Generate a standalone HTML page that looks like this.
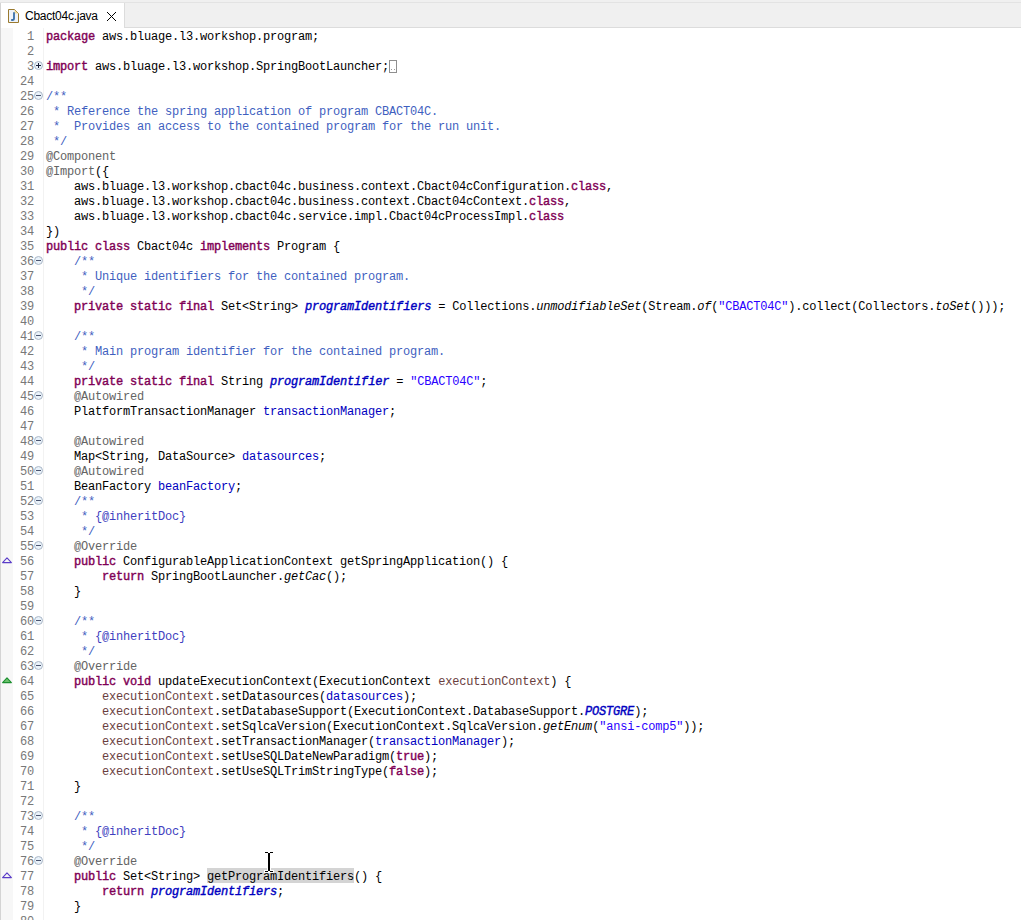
<!DOCTYPE html>
<html><head><meta charset="utf-8"><style>
html,body{margin:0;padding:0;}
body{width:1021px;height:920px;overflow:hidden;position:relative;background:#fff;font-family:"Liberation Mono",monospace;}
#topbar{position:absolute;left:0;top:0;width:1021px;height:28px;background:#f0f0f0;}
#topline{position:absolute;left:0;top:2px;width:1021px;height:1px;background:#e3e3e3;}
#tab{position:absolute;left:1px;top:3px;width:123px;height:25px;background:#fff;}
#tabborder{position:absolute;left:124px;top:3px;width:1px;height:24px;background:#dcdcdc;}
#tabbottom{position:absolute;left:124px;top:27px;width:897px;height:1px;background:#dcdcdc;}
#tabtitle{position:absolute;left:25px;top:8.5px;letter-spacing:-0.25px;font-family:"Liberation Sans",sans-serif;font-size:12px;color:#000;white-space:pre;}
#leftborder{position:absolute;left:0;top:3px;width:1px;height:917px;background:#d4d4d4;}
#ruler{position:absolute;left:1px;top:28px;width:12px;height:892px;background:#f7f7f7;}
#sep{position:absolute;left:43px;top:28px;width:1px;height:892px;background:#f2f2f2;}
.ln{position:absolute;left:12px;width:22px;height:15px;text-align:right;color:#787878;font-size:12.0px;line-height:15px;letter-spacing:-0.200px;white-space:pre;}
.cd{position:absolute;left:46px;height:15px;color:#000;font-size:12.0px;line-height:15px;letter-spacing:-0.200px;white-space:pre;}
.k{color:#7f0055;font-weight:normal;-webkit-text-stroke:0.4px #7f0055;}
.a{color:#646464;}
.c{color:#3f5fbf;}
.jl{color:#3f3fbf;}
.s{color:#2a00ff;}
.f{color:#0000c0;}
.sf{color:#0000c0;font-weight:normal;font-style:italic;-webkit-text-stroke:0.4px #0000c0;}
.sm{font-style:italic;}
.p{color:#6a3e3e;}
.hl{}
#fbox{position:absolute;left:389px;top:60px;width:6px;height:11px;border:1px solid #8f8f8f;}
#fbox i{position:absolute;top:8px;width:1px;height:1px;background:#9a9a9a;}
#hlbox{position:absolute;left:207px;top:868px;width:147px;height:15px;background:#d4d4d4;}
.box{display:inline-block;position:relative;width:7px;height:13px;vertical-align:top;}
.box i{position:absolute;left:0;top:1px;width:6px;height:11px;border:1px solid #8c8c8c;}
.fold{position:absolute;left:34px;}
.tri{position:absolute;left:1px;}
#ibeam{position:absolute;left:259px;top:848px;}
</style></head><body>
<div id="topbar"></div><div id="topline"></div>
<div id="tab"></div><div id="tabborder"></div><div id="tabbottom"></div>
<svg style="position:absolute;left:8px;top:9px" width="11" height="14" viewBox="0 0 11 14"><path d="M0.5 0.5 H6.5 L10.5 4.5 V13.5 H0.5 Z" fill="#eef3fa" stroke="#9a7a30" stroke-width="1"/><path d="M6.5 0.8 V4.5 H10.2 Z" fill="#f2dc98" stroke="none"/><path d="M6 3.2 V9.4 Q6 11 4.2 11 H3.2" fill="none" stroke="#3a70a8" stroke-width="1.8"/></svg>
<div id="tabtitle">Cbact04c.java</div>
<svg style="position:absolute;left:107px;top:12px" width="9" height="9" viewBox="0 0 9 9" shape-rendering="crispEdges"><g fill="#000"><rect x="0" y="0" width="1" height="1"/><rect x="8" y="0" width="1" height="1"/><rect x="1" y="1" width="1" height="1"/><rect x="7" y="1" width="1" height="1"/><rect x="2" y="2" width="1" height="1"/><rect x="6" y="2" width="1" height="1"/><rect x="3" y="3" width="1" height="1"/><rect x="5" y="3" width="1" height="1"/><rect x="4" y="4" width="1" height="1"/><rect x="4" y="4" width="1" height="1"/><rect x="5" y="5" width="1" height="1"/><rect x="3" y="5" width="1" height="1"/><rect x="6" y="6" width="1" height="1"/><rect x="2" y="6" width="1" height="1"/><rect x="7" y="7" width="1" height="1"/><rect x="1" y="7" width="1" height="1"/><rect x="8" y="8" width="1" height="1"/><rect x="0" y="8" width="1" height="1"/></g></svg>
<div id="leftborder"></div>
<div id="ruler"></div>
<div id="sep"></div>
<div id="hlbox"></div>
<div id="fbox"><i style="left:1px"></i><i style="left:4px"></i></div>
<div class="ln" style="top:30px">1</div>
<div class="cd" style="top:30px"><span class="k">package</span> aws.bluage.l3.workshop.program;</div>
<div class="ln" style="top:45px">2</div>
<div class="ln" style="top:60px">3</div>
<div class="cd" style="top:60px"><span class="k">import</span> aws.bluage.l3.workshop.SpringBootLauncher;</div>
<svg class="fold" style="top:61px" width="9" height="9" viewBox="0 0 9 9"><circle cx="4.5" cy="4.5" r="4" fill="#e9f2fa" stroke="#aab6c6" stroke-width="1"/><g stroke-width="1" fill="none"><path d="M2 4.5H7M4.5 2V7" stroke="#161c36"/></g></svg>
<div class="ln" style="top:75px">24</div>
<div class="ln" style="top:90px">25</div>
<div class="cd" style="top:90px"><span class="c">/**</span></div>
<svg class="fold" style="top:91px" width="9" height="9" viewBox="0 0 9 9"><circle cx="4.5" cy="4.5" r="4" fill="#e9f2fa" stroke="#aab6c6" stroke-width="1"/><g stroke-width="1" fill="none"><path d="M2 4.5H7" stroke="#4b5570"/></g></svg>
<div class="ln" style="top:105px">26</div>
<div class="cd" style="top:105px"><span class="c"> * Reference the spring application of program CBACT04C.</span></div>
<div class="ln" style="top:120px">27</div>
<div class="cd" style="top:120px"><span class="c"> *  Provides an access to the contained program for the run unit.</span></div>
<div class="ln" style="top:135px">28</div>
<div class="cd" style="top:135px"><span class="c"> */</span></div>
<div class="ln" style="top:150px">29</div>
<div class="cd" style="top:150px"><span class="a">@Component</span></div>
<div class="ln" style="top:165px">30</div>
<div class="cd" style="top:165px"><span class="a">@Import</span>({</div>
<div class="ln" style="top:180px">31</div>
<div class="cd" style="top:180px">    aws.bluage.l3.workshop.cbact04c.business.context.Cbact04cConfiguration.<span class="k">class</span>,</div>
<div class="ln" style="top:195px">32</div>
<div class="cd" style="top:195px">    aws.bluage.l3.workshop.cbact04c.business.context.Cbact04cContext.<span class="k">class</span>,</div>
<div class="ln" style="top:210px">33</div>
<div class="cd" style="top:210px">    aws.bluage.l3.workshop.cbact04c.service.impl.Cbact04cProcessImpl.<span class="k">class</span></div>
<div class="ln" style="top:225px">34</div>
<div class="cd" style="top:225px">})</div>
<div class="ln" style="top:240px">35</div>
<div class="cd" style="top:240px"><span class="k">public</span> <span class="k">class</span> Cbact04c <span class="k">implements</span> Program {</div>
<div class="ln" style="top:255px">36</div>
<div class="cd" style="top:255px">    <span class="c">/**</span></div>
<svg class="fold" style="top:256px" width="9" height="9" viewBox="0 0 9 9"><circle cx="4.5" cy="4.5" r="4" fill="#e9f2fa" stroke="#aab6c6" stroke-width="1"/><g stroke-width="1" fill="none"><path d="M2 4.5H7" stroke="#4b5570"/></g></svg>
<div class="ln" style="top:270px">37</div>
<div class="cd" style="top:270px">    <span class="c"> * Unique identifiers for the contained program.</span></div>
<div class="ln" style="top:285px">38</div>
<div class="cd" style="top:285px">    <span class="c"> */</span></div>
<div class="ln" style="top:300px">39</div>
<div class="cd" style="top:300px">    <span class="k">private</span> <span class="k">static</span> <span class="k">final</span> Set&lt;String&gt; <span class="sf">programIdentifiers</span> = Collections.<span class="sm">unmodifiableSet</span>(Stream.<span class="sm">of</span>(<span class="s">"CBACT04C"</span>).collect(Collectors.<span class="sm">toSet</span>()));</div>
<div class="ln" style="top:315px">40</div>
<div class="ln" style="top:330px">41</div>
<div class="cd" style="top:330px">    <span class="c">/**</span></div>
<svg class="fold" style="top:331px" width="9" height="9" viewBox="0 0 9 9"><circle cx="4.5" cy="4.5" r="4" fill="#e9f2fa" stroke="#aab6c6" stroke-width="1"/><g stroke-width="1" fill="none"><path d="M2 4.5H7" stroke="#4b5570"/></g></svg>
<div class="ln" style="top:345px">42</div>
<div class="cd" style="top:345px">    <span class="c"> * Main program identifier for the contained program.</span></div>
<div class="ln" style="top:360px">43</div>
<div class="cd" style="top:360px">    <span class="c"> */</span></div>
<div class="ln" style="top:375px">44</div>
<div class="cd" style="top:375px">    <span class="k">private</span> <span class="k">static</span> <span class="k">final</span> String <span class="sf">programIdentifier</span> = <span class="s">"CBACT04C"</span>;</div>
<div class="ln" style="top:390px">45</div>
<div class="cd" style="top:390px">    <span class="a">@Autowired</span></div>
<svg class="fold" style="top:391px" width="9" height="9" viewBox="0 0 9 9"><circle cx="4.5" cy="4.5" r="4" fill="#e9f2fa" stroke="#aab6c6" stroke-width="1"/><g stroke-width="1" fill="none"><path d="M2 4.5H7" stroke="#4b5570"/></g></svg>
<div class="ln" style="top:405px">46</div>
<div class="cd" style="top:405px">    PlatformTransactionManager <span class="f">transactionManager</span>;</div>
<div class="ln" style="top:420px">47</div>
<div class="ln" style="top:435px">48</div>
<div class="cd" style="top:435px">    <span class="a">@Autowired</span></div>
<svg class="fold" style="top:436px" width="9" height="9" viewBox="0 0 9 9"><circle cx="4.5" cy="4.5" r="4" fill="#e9f2fa" stroke="#aab6c6" stroke-width="1"/><g stroke-width="1" fill="none"><path d="M2 4.5H7" stroke="#4b5570"/></g></svg>
<div class="ln" style="top:450px">49</div>
<div class="cd" style="top:450px">    Map&lt;String, DataSource&gt; <span class="f">datasources</span>;</div>
<div class="ln" style="top:465px">50</div>
<div class="cd" style="top:465px">    <span class="a">@Autowired</span></div>
<svg class="fold" style="top:466px" width="9" height="9" viewBox="0 0 9 9"><circle cx="4.5" cy="4.5" r="4" fill="#e9f2fa" stroke="#aab6c6" stroke-width="1"/><g stroke-width="1" fill="none"><path d="M2 4.5H7" stroke="#4b5570"/></g></svg>
<div class="ln" style="top:480px">51</div>
<div class="cd" style="top:480px">    BeanFactory <span class="f">beanFactory</span>;</div>
<div class="ln" style="top:495px">52</div>
<div class="cd" style="top:495px">    <span class="c">/**</span></div>
<svg class="fold" style="top:496px" width="9" height="9" viewBox="0 0 9 9"><circle cx="4.5" cy="4.5" r="4" fill="#e9f2fa" stroke="#aab6c6" stroke-width="1"/><g stroke-width="1" fill="none"><path d="M2 4.5H7" stroke="#4b5570"/></g></svg>
<div class="ln" style="top:510px">53</div>
<div class="cd" style="top:510px">    <span class="c"> * </span><span class="jl">{@inheritDoc}</span></div>
<div class="ln" style="top:525px">54</div>
<div class="cd" style="top:525px">    <span class="c"> */</span></div>
<div class="ln" style="top:540px">55</div>
<div class="cd" style="top:540px">    <span class="a">@Override</span></div>
<svg class="fold" style="top:541px" width="9" height="9" viewBox="0 0 9 9"><circle cx="4.5" cy="4.5" r="4" fill="#e9f2fa" stroke="#aab6c6" stroke-width="1"/><g stroke-width="1" fill="none"><path d="M2 4.5H7" stroke="#4b5570"/></g></svg>
<div class="ln" style="top:555px">56</div>
<div class="cd" style="top:555px">    <span class="k">public</span> ConfigurableApplicationContext getSpringApplication() {</div>
<svg class="tri" style="top:556px" width="13" height="8" viewBox="0 0 13 8"><path d="M1.6 6.6 L6 1.8 L10.4 6.6 Z" fill="none" stroke="#5a3cc8" stroke-width="1.1" stroke-linejoin="round"/></svg>
<div class="ln" style="top:570px">57</div>
<div class="cd" style="top:570px">        <span class="k">return</span> SpringBootLauncher.<span class="sm">getCac</span>();</div>
<div class="ln" style="top:585px">58</div>
<div class="cd" style="top:585px">    }</div>
<div class="ln" style="top:600px">59</div>
<div class="ln" style="top:615px">60</div>
<div class="cd" style="top:615px">    <span class="c">/**</span></div>
<svg class="fold" style="top:616px" width="9" height="9" viewBox="0 0 9 9"><circle cx="4.5" cy="4.5" r="4" fill="#e9f2fa" stroke="#aab6c6" stroke-width="1"/><g stroke-width="1" fill="none"><path d="M2 4.5H7" stroke="#4b5570"/></g></svg>
<div class="ln" style="top:630px">61</div>
<div class="cd" style="top:630px">    <span class="c"> * </span><span class="jl">{@inheritDoc}</span></div>
<div class="ln" style="top:645px">62</div>
<div class="cd" style="top:645px">    <span class="c"> */</span></div>
<div class="ln" style="top:660px">63</div>
<div class="cd" style="top:660px">    <span class="a">@Override</span></div>
<svg class="fold" style="top:661px" width="9" height="9" viewBox="0 0 9 9"><circle cx="4.5" cy="4.5" r="4" fill="#e9f2fa" stroke="#aab6c6" stroke-width="1"/><g stroke-width="1" fill="none"><path d="M2 4.5H7" stroke="#4b5570"/></g></svg>
<div class="ln" style="top:675px">64</div>
<div class="cd" style="top:675px">    <span class="k">public</span> <span class="k">void</span> updateExecutionContext(ExecutionContext <span class="p">executionContext</span>) {</div>
<svg class="tri" style="top:676px" width="13" height="8" viewBox="0 0 13 8"><path d="M1.6 6.6 L6 1.8 L10.4 6.6 Z" fill="#6cc06c" stroke="#1c9030" stroke-width="1.1" stroke-linejoin="round"/></svg>
<div class="ln" style="top:690px">65</div>
<div class="cd" style="top:690px">        <span class="p">executionContext</span>.setDatasources(<span class="f">datasources</span>);</div>
<div class="ln" style="top:705px">66</div>
<div class="cd" style="top:705px">        <span class="p">executionContext</span>.setDatabaseSupport(ExecutionContext.DatabaseSupport.<span class="sf">POSTGRE</span>);</div>
<div class="ln" style="top:720px">67</div>
<div class="cd" style="top:720px">        <span class="p">executionContext</span>.setSqlcaVersion(ExecutionContext.SqlcaVersion.<span class="sm">getEnum</span>(<span class="s">"ansi-comp5"</span>));</div>
<div class="ln" style="top:735px">68</div>
<div class="cd" style="top:735px">        <span class="p">executionContext</span>.setTransactionManager(<span class="f">transactionManager</span>);</div>
<div class="ln" style="top:750px">69</div>
<div class="cd" style="top:750px">        <span class="p">executionContext</span>.setUseSQLDateNewParadigm(<span class="k">true</span>);</div>
<div class="ln" style="top:765px">70</div>
<div class="cd" style="top:765px">        <span class="p">executionContext</span>.setUseSQLTrimStringType(<span class="k">false</span>);</div>
<div class="ln" style="top:780px">71</div>
<div class="cd" style="top:780px">    }</div>
<div class="ln" style="top:795px">72</div>
<div class="ln" style="top:810px">73</div>
<div class="cd" style="top:810px">    <span class="c">/**</span></div>
<svg class="fold" style="top:811px" width="9" height="9" viewBox="0 0 9 9"><circle cx="4.5" cy="4.5" r="4" fill="#e9f2fa" stroke="#aab6c6" stroke-width="1"/><g stroke-width="1" fill="none"><path d="M2 4.5H7" stroke="#4b5570"/></g></svg>
<div class="ln" style="top:825px">74</div>
<div class="cd" style="top:825px">    <span class="c"> * </span><span class="jl">{@inheritDoc}</span></div>
<div class="ln" style="top:840px">75</div>
<div class="cd" style="top:840px">    <span class="c"> */</span></div>
<div class="ln" style="top:855px">76</div>
<div class="cd" style="top:855px">    <span class="a">@Override</span></div>
<svg class="fold" style="top:856px" width="9" height="9" viewBox="0 0 9 9"><circle cx="4.5" cy="4.5" r="4" fill="#e9f2fa" stroke="#aab6c6" stroke-width="1"/><g stroke-width="1" fill="none"><path d="M2 4.5H7" stroke="#4b5570"/></g></svg>
<div class="ln" style="top:870px">77</div>
<div class="cd" style="top:870px">    <span class="k">public</span> Set&lt;String&gt; <span class="hl">getProgramIdentifiers</span>() {</div>
<svg class="tri" style="top:871px" width="13" height="8" viewBox="0 0 13 8"><path d="M1.6 6.6 L6 1.8 L10.4 6.6 Z" fill="none" stroke="#5a3cc8" stroke-width="1.1" stroke-linejoin="round"/></svg>
<div class="ln" style="top:885px">78</div>
<div class="cd" style="top:885px">        <span class="k">return</span> <span class="sf">programIdentifiers</span>;</div>
<div class="ln" style="top:900px">79</div>
<div class="cd" style="top:900px">    }</div>
<div class="ln" style="top:915px">80</div>
<svg id="ibeam" width="20" height="26" viewBox="0 0 20 26" shape-rendering="crispEdges"><g fill="#fff"><rect x="5" y="3" width="10" height="3"/><rect x="8" y="4" width="4" height="20"/><rect x="5" y="22" width="10" height="3"/></g><g fill="#000"><rect x="6" y="4" width="3" height="1"/><rect x="11" y="4" width="3" height="1"/><rect x="9" y="5" width="2" height="18"/><rect x="6" y="23" width="3" height="1"/><rect x="11" y="23" width="3" height="1"/></g></svg>
</body></html>
